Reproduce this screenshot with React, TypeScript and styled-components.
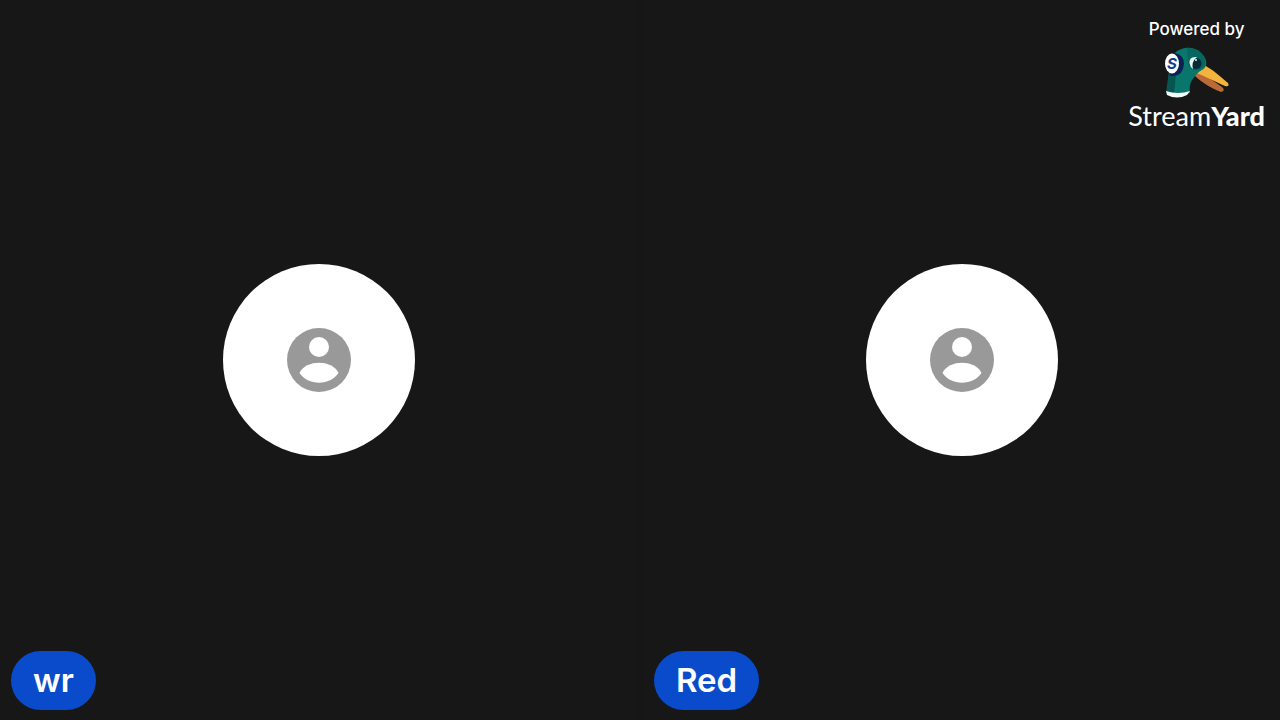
import React from 'react';
import styled, { createGlobalStyle } from 'styled-components';

const GlobalStyle = createGlobalStyle`
  * { box-sizing: border-box; }
  body {
    margin: 0;
    background: #171717;
    color: #fff;
    font-family: Inter, "Liberation Sans", sans-serif;
  }
`;

const Stage = styled.main`
  position: relative;
  display: grid;
  grid-template-columns: 1fr 1fr;
  gap: 6px;
  min-height: 100vh;
  background: #161616;
`;

const Tile = styled.section`
  position: relative;
  display: flex;
  align-items: center;
  justify-content: center;
  background: #171717;
`;

const Avatar = styled.div`
  display: flex;
  align-items: center;
  justify-content: center;
  width: 192px;
  height: 192px;
  border-radius: 50%;
  background: #fff;
`;

const NameTag = styled.div`
  position: absolute;
  left: 11px;
  bottom: 10px;
  padding: 10px 22px;
  border-radius: 30px;
  background: #094bcb;
  font-size: 33px;
  font-weight: 600;
  line-height: 39px;
`;

const Branding = styled.aside`
  position: absolute;
  top: 19px;
  right: 15px;
  display: flex;
  flex-direction: column;
  align-items: center;
`;

const Powered = styled.span`
  margin-bottom: 3px;
  font-size: 17px;
  font-weight: 500;
  line-height: 20px;
`;

const Wordmark = styled.span`
  font-family: Lato, "Liberation Sans", sans-serif;
  font-size: 27px;
  font-weight: 400;
  line-height: 28px;

  strong { font-weight: 900; }
`;

const PersonIcon = () => (
  <svg width="64" height="64" viewBox="0 0 64 64" aria-hidden="true">
    <circle cx="32" cy="32" r="32" fill="#999" />
    <circle cx="32" cy="19" r="10" fill="#fff" />
    <path d="M12.5 45C15.5 38 24 34.8 32 34.8S48.500 38 51.500 45C47 51.500 40 54.700 32 54.700S17 51.500 12.500 45Z" fill="#fff" />
  </svg>
);

const DuckLogo = () => (
  <svg width="80" height="60" viewBox="2 0 80 60" aria-hidden="true">
    <path d="M40 30L47 31L67 45Q71 49 66 50C58 47 47 41 40 34Z" fill="#b96a38" />
    <path d="M41 30L49 23C57 27 66 35 73 41Q75 45 70 44C61 40 50 34 41 31Z" fill="#f3b33d" />
    <path d="M19 12C25 5 38 3 46 11C53 17 53 25 47 28C43 30 40 34 37 38Q34 43 35 51Q24 57 12 51L14 31Z" fill="#08766b" />
    <path d="M32 6Q45 6 49 15Q53 25 43 28Q36 29 33 22Z" fill="#07665f" />
    <path d="M14 29L21 31L19 53L11 50Z" fill="#075451" />
    <path d="M11 49Q23 53 35 49L32 53Q22 58 12 53Z" fill="#f4fbf7" />
    <path d="M15 11H20Q29 13 29 22Q28 33 19 34H15Z" fill="#0b2151" />
    <ellipse cx="17" cy="21.500" rx="7" ry="10" fill="#fff" />
    <text x="17" y="27" textAnchor="middle" fill="#123f8c" fontFamily="Inter, sans-serif" fontSize="15" fontWeight="700" fontStyle="italic">S</text>
    <circle cx="41" cy="21.500" r="5.500" fill="#062b36" />
    <path d="M42 15Q34 14 34.500 21Q35 25 38 27Q36 20 42 15Z" fill="#e7f8f2" />
    <circle cx="41" cy="18" r="1" fill="#e7f8f2" />
  </svg>
);

const participants = ['wr', 'Red'];

export default function App() {
  return (
    <>
      <GlobalStyle />
      <Stage>
        {participants.map((name) => (
          <Tile key={name} aria-label={name}>
            <Avatar><PersonIcon /></Avatar>
            <NameTag>{name}</NameTag>
          </Tile>
        ))}
        <Branding>
          <Powered>Powered by</Powered>
          <DuckLogo />
          <Wordmark>Stream<strong>Yard</strong></Wordmark>
        </Branding>
      </Stage>
    </>
  );
}
